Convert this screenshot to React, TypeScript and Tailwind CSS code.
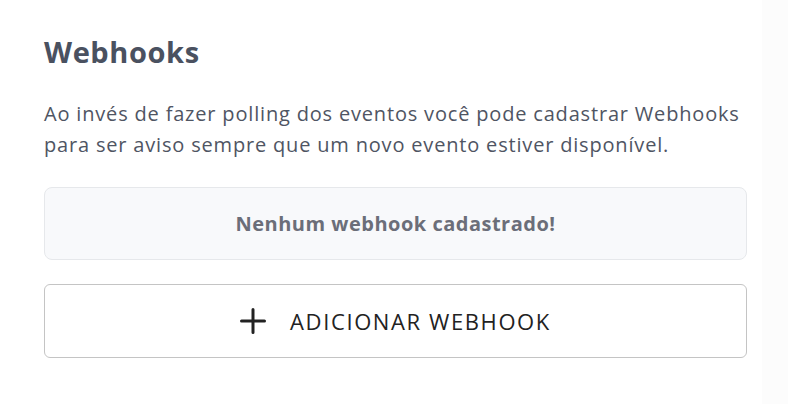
function PlusIcon() {
  return (
    <svg width="26" height="26" viewBox="0 0 26 26" fill="none" stroke="#222" strokeWidth="3" strokeLinecap="round">
      <path d="M13 1.5v23M1.5 13h23" />
    </svg>
  );
}

export default function App() {
  return (
    <div className="flex h-[404px] w-[788px] bg-white font-['Open_Sans',sans-serif]">
      <main className="w-[762px] pl-[44px] pr-[15px] pt-[34px]">
        <h1 className="text-[29px] font-bold leading-[36px] tracking-[0.6px] text-[#4a5160]">Webhooks</h1>
        <p className="mt-[28px] text-[20px] leading-[31px] tracking-[0.82px] text-[#4f5563]">
          Ao invés de fazer polling dos eventos você pode cadastrar Webhooks
          <br />
          para ser aviso sempre que um novo evento estiver disponível.
        </p>
        <div className="mt-[27px] flex h-[73px] items-center justify-center rounded-[8px] border border-[#e6e8eb] bg-[#f8f9fb]">
          <span className="text-[20px] font-bold tracking-[0.5px] text-[#6b6e79]">Nenhum webhook cadastrado!</span>
        </div>
        <button className="mt-[24px] flex h-[74px] w-full items-center justify-center gap-[24px] rounded-[6px] border-[1.5px] border-[#c4c4c4] bg-white">
          <PlusIcon />
          <span className="text-[22px] tracking-[1.6px] text-[#222]">ADICIONAR WEBHOOK</span>
        </button>
      </main>
      <aside className="flex-1 bg-[#fcfcfc]" />
    </div>
  );
}
